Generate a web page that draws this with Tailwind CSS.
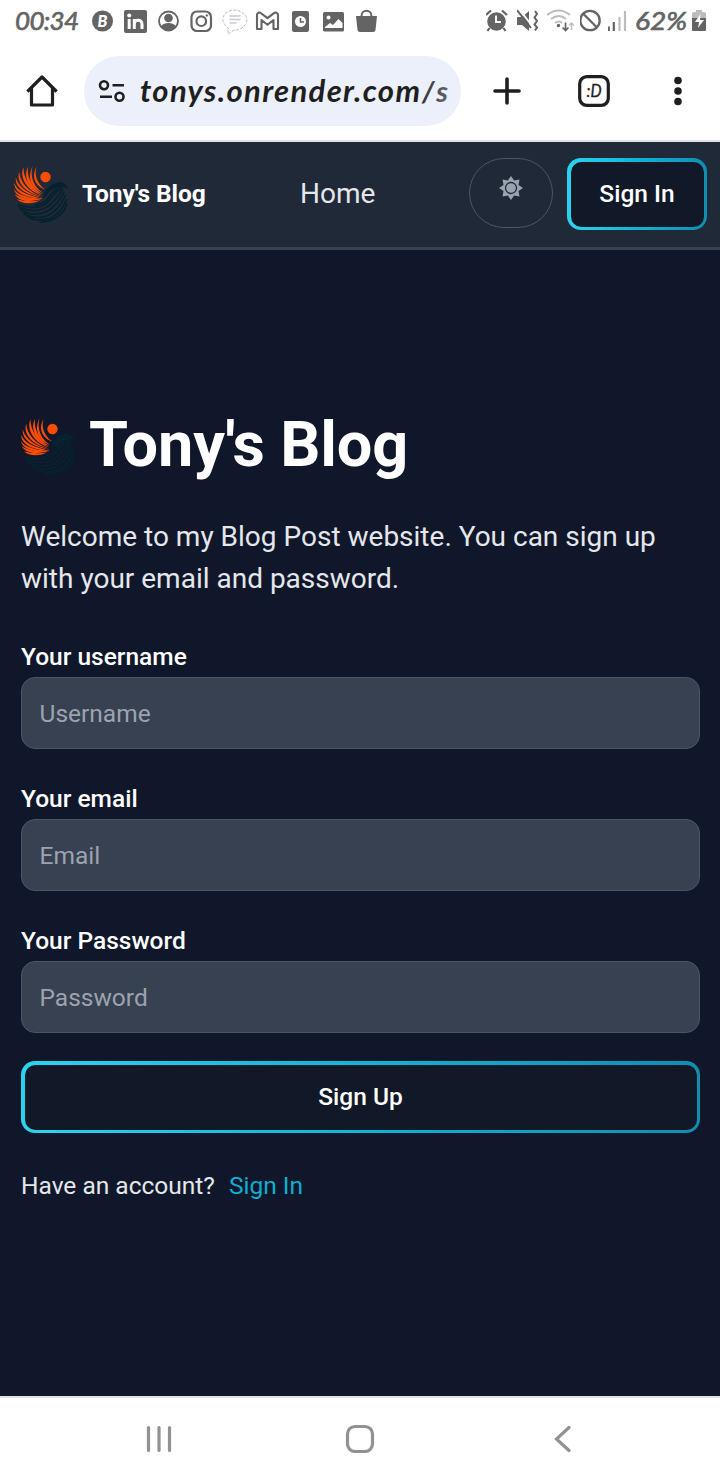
<!DOCTYPE html>
<html lang="en">
<head>
<meta charset="utf-8">
<title>Tony's Blog</title>
<script src="https://cdn.jsdelivr.net/npm/@tailwindcss/browser@4"></script>
</head>
<body class="w-[720px] h-[1480px] overflow-hidden bg-white flex flex-col font-['Roboto',sans-serif]">

<svg width="0" height="0" class="hidden">
  <symbol id="phoenix" viewBox="40 30 170 180">
    <g fill="#ff4d05">
      <circle cx="137" cy="66" r="15.500"/>
      <path d="M110 36C103 58 111 87 136 103C108 95 93 66 110 36Z"/>
      <path d="M98 34C90 63 101 97 129 113C97 104 80 70 98 34Z"/>
      <path d="M84 35C81 65 97 99 127 117C91 107 68 70 84 35Z"/>
      <path d="M71 37C70 69 92 104 126 121C84 109 57 69 71 37Z"/>
      <path d="M58 50C61 84 88 111 127 125C80 114 48 84 58 50Z"/>
      <path d="M48 67C54 95 84 117 128 128C78 121 44 98 48 67Z"/>
      <path d="M43 84C53 108 84 122 129 131C78 130 43 112 43 84Z"/>
      <path d="M42 102C55 121 88 130 130 132C86 137 48 129 42 102Z"/>
      <path d="M45 118C63 131 94 134 128 130C98 143 58 142 45 118Z"/>
      <path d="M51 133C75 140 101 140 121 136C101 148 66 149 51 133Z"/>
    </g>
    <path d="M132 131C129 107 148 90 170 83C181 77 201 83 204 103C196 95 190 96 181 100C170 98 148 105 132 131Z" fill="#06222e"/>
    <g fill="none" stroke="#06222e" stroke-width="5.500" stroke-linecap="round">
      <path d="M184 101C156 111 153 157 103 157C87 157 72 155 58 148"/>
      <path d="M172 104C149 111 148 148 107 150"/>
      <path d="M189 105C171 121 157 164 107 166C87 167 67 162 55 153"/>
      <path d="M192 114C179 131 161 174 112 177C90 178 73 173 62 163"/>
      <path d="M196 122C185 144 166 184 119 187C100 188 84 184 73 176"/>
      <path d="M200 134C191 156 169 193 125 195C110 196 98 193 88 188"/>
      <path d="M201 148C195 170 169 200 121 202"/>
    </g>
    <path d="M145 119Q155 100 172 98" fill="none" stroke="#1c2a36" stroke-width="2"/>
  </symbol>
</svg>

<!-- Phone status bar -->
<div class="h-[42px] shrink-0 flex items-center justify-between pr-[13px] text-[#646464]">
  <div class="flex items-center">
    <svg class="w-[86px] h-[42px]" viewBox="0 0 86 42"><text x="15" y="30" textLength="64" lengthAdjust="spacing" font-family="Lato" font-style="italic" font-weight="400" font-size="26" fill="currentColor" stroke="currentColor" stroke-width=".7">00:34</text></svg>
    <svg class="w-[33px] h-[42px]" viewBox="0 0 33 42"><circle cx="16.500" cy="21" r="10.500" fill="currentColor"/><text x="16.500" y="26.500" text-anchor="middle" font-family="Lato" font-weight="900" font-style="italic" font-size="16" fill="white">B</text></svg>
    <svg class="w-[33px] h-[42px]" viewBox="0 0 33 42"><rect x="5" y="10" width="23" height="23" rx="2" fill="currentColor"/><circle cx="10.200" cy="15.400" r="2" fill="white"/><path d="M10.200 19v10M15.300 29v-10M15.300 24c0-5 7.700-5 7.700 0v5" fill="none" stroke="white" stroke-width="3"/></svg>
    <svg class="w-[33px] h-[42px]" viewBox="0 0 33 42"><circle cx="16.500" cy="21" r="9.500" fill="none" stroke="currentColor" stroke-width="1.800"/><circle cx="16.500" cy="18" r="4.300" fill="currentColor"/><path d="M9 27c1-3 4-4 7.500-4s6.500 1 7.500 4c-4 5-11 5-15 0Z" fill="currentColor"/></svg>
    <svg class="w-[33px] h-[42px]" viewBox="0 0 33 42" fill="none" stroke="currentColor" stroke-width="2.200"><rect x="6.500" y="11.500" width="19.500" height="19.500" rx="5.500"/><circle cx="16.300" cy="21.200" r="4.800"/><circle cx="21.900" cy="15.500" r=".8" fill="currentColor" stroke-width="1"/></svg>
    <svg class="w-[33px] h-[42px]" viewBox="0 0 33 42" fill="none"><path d="M11 29C-1 20 7 10 16 10s19 9 8 18c-3 2-6 2-8 2l-6 4v-5" stroke="#bcbcc2" stroke-width="1" stroke-dasharray="3 1.500"/><path d="M11.500 16h11M11.500 19.500h11M11.500 23h7" stroke="#c9c9da" stroke-width="1.400"/></svg>
    <svg class="w-[33px] h-[42px]" viewBox="0 0 33 42" fill="none" stroke="currentColor" stroke-width="2.100" stroke-linejoin="round"><path d="M6 29V15c0-2.500 2.500-3 4-1.800l6.500 5 6.500-5c1.500-1.200 4-.7 4 1.800v14h-4.500v-9l-6 4.800-6-4.800v9Z"/></svg>
    <svg class="w-[33px] h-[42px]" viewBox="0 0 33 42"><rect x="8" y="11" width="17" height="21" rx="2" fill="currentColor"/><circle cx="16.500" cy="21.500" r="5.500" fill="white"/><path d="M16.500 18v4h3.500" fill="none" stroke="currentColor" stroke-width="1.600"/></svg>
    <svg class="w-[33px] h-[42px]" viewBox="0 0 33 42"><rect x="6" y="12" width="21" height="19.500" rx="1.500" fill="currentColor"/><circle cx="11.500" cy="17.500" r="2" fill="white"/><path d="M8 27l5-4 3 2 5.500-6 4 4v5H8Z" fill="white"/></svg>
    <svg class="w-[33px] h-[42px]" viewBox="0 0 33 42"><path d="M6 16h21l-1.500 14q-.4 2-2.500 2H10q-2.100 0-2.500-2Z" fill="currentColor"/><path d="M11.500 19v-3c0-7 10-7 10 0v3" fill="none" stroke="currentColor" stroke-width="2"/></svg>
  </div>
  <div class="flex items-center">
    <svg class="w-[31px] h-[42px]" viewBox="0 0 31 42"><circle cx="10.500" cy="21.500" r="9.300" fill="currentColor"/><path d="M0 15l5-4.500M21 15l-5-4.500M3.500 28l-2 3M17.500 28l2 3" stroke="currentColor" stroke-width="2.200"/><path d="M10 15.500v6.500h5" fill="none" stroke="white" stroke-width="1.900"/></svg>
    <svg class="w-[30px] h-[42px]" viewBox="0 0 30 42"><path d="M0 17h5l7-6v20l-7-6H0Z" fill="currentColor"/><path d="M2 9l14 18" stroke="white" stroke-width="2"/><path d="M0 10l14 18" stroke="currentColor" stroke-width="2"/><path d="M18 11l2 3-2.500 3.500 2.500 3.500-2.500 3.500 2.500 3-2 3" fill="none" stroke="currentColor" stroke-width="2"/></svg>
    <svg class="w-[33px] h-[42px]" viewBox="1 0 33 42" fill="none"><path d="M1 15Q13 6 24 15M5 19Q13 13 20 19M9 23q4-3 7 0" stroke="#bdbdbd" stroke-width="2"/><circle cx="12.500" cy="25.500" r="1.700" fill="currentColor"/><path d="M19.500 22.500v8m-3-3l3 3 3-3" stroke="currentColor" stroke-width="1.700"/><path d="M25.500 30v-7m-2.500 2.500l2.500-2.500 2.500 2.500" stroke="#bdbdbd" stroke-width="1.500"/></svg>
    <svg class="w-[28px] h-[42px]" viewBox="1 0 28 42" fill="none" stroke="currentColor" stroke-width="2.300"><circle cx="11" cy="20.500" r="9.700"/><path d="M4.500 14l13 13"/></svg>
    <svg class="w-[27px] h-[42px]" viewBox="1 0 27 42" stroke-width="2.200"><path d="M1.800 31v-4.500M6.800 31v-9" stroke="currentColor"/><path d="M12.500 31V17M18 31V11" stroke="#bdbdbd"/></svg>
    <svg class="w-[57px] h-[42px]" viewBox="0 0 57 42"><text x="0" y="30" textLength="52" lengthAdjust="spacingAndGlyphs" font-family="Lato" font-style="italic" font-weight="400" font-size="26" fill="currentColor" stroke="currentColor" stroke-width=".7">62%</text></svg>
    <svg class="w-[15px] h-[42px]" viewBox="0 0 15 42"><path d="M0 14q0-2 2-2h2v-2h6v2h2q2 0 2 2v7H0Z" fill="#bdbdbd"/><path d="M0 18h14v12q0 1-1 1H1q-1 0-1-1Z" fill="currentColor"/><path d="M8.500 14L3 22h4l-1 6 6-8H8Z" fill="white"/></svg>
  </div>
</div>

<!-- Browser toolbar -->
<div class="h-[100px] shrink-0 flex items-start border-b-2 border-[#dfe1e2] pt-[14px] text-[#1f1f1f]">
  <div class="w-[84px] h-[70px] flex items-center justify-center">
    <svg class="w-[34px] h-[36px]" viewBox="0 0 34 36" fill="none" stroke="currentColor" stroke-width="3.200" stroke-linejoin="round" stroke-linecap="square"><path d="M3.500 17.500L17 4l13.500 13.500M6.500 16v16h21V16"/></svg>
  </div>
  <div class="w-[377px] h-[70px] rounded-full bg-[#ecf0fa] flex items-center pl-[14px]">
    <svg class="w-[29px] h-[30px] shrink-0" viewBox="0 0 29 30" fill="none" stroke="currentColor" stroke-width="2.600"><circle cx="6" cy="9.200" r="4"/><path d="M14.500 9.200H26M2 20.700h12"/><circle cx="21.500" cy="20.700" r="4"/></svg>
    <svg class="w-[324px] h-[70px]" viewBox="0 0 324 70">
      <defs><linearGradient id="fade" gradientUnits="userSpaceOnUse" x1="285" x2="330" y1="0" y2="0"><stop offset="0" stop-color="#1f1f1f"/><stop offset="1" stop-color="#74777e"/></linearGradient></defs>
      <text x="13" y="45.500" textLength="280" lengthAdjust="spacing" font-family="Lato" font-style="italic" font-weight="700" font-size="31" fill="currentColor">tonys.onrender.com</text>
      <text x="295" y="45.500" font-family="Lato" font-style="italic" font-weight="700" font-size="29" textLength="26" fill="url(#fade)">/s</text>
    </svg>
  </div>
  <div class="w-[92px] h-[70px] flex items-center justify-center">
    <svg class="w-[28px] h-[28px]" viewBox="0 0 28 28" stroke="currentColor" stroke-width="3.600" stroke-linecap="round"><path d="M14 2v24M2 14h24"/></svg>
  </div>
  <div class="w-[82px] h-[70px] flex items-center justify-center">
    <svg class="w-[32px] h-[32px]" viewBox="0 0 32 32"><rect x="1.700" y="1.700" width="28.600" height="28.600" rx="7" fill="none" stroke="currentColor" stroke-width="3.200"/><text x="8.500" y="21.500" textLength="15" lengthAdjust="spacingAndGlyphs" font-family="Lato" font-style="italic" font-weight="400" font-size="17" fill="currentColor" stroke="currentColor" stroke-width=".4">:D</text></svg>
  </div>
  <div class="w-[85px] h-[70px] flex items-center justify-center">
    <svg class="w-[8px] h-[30px]" viewBox="0 0 8 30" fill="currentColor"><circle cx="4" cy="4.500" r="3.800"/><circle cx="4" cy="15" r="3.800"/><circle cx="4" cy="25.500" r="3.800"/></svg>
  </div>
</div>

<!-- Site header -->
<header class="h-[108px] shrink-0 bg-[#1f2937] border-b-3 border-[#374151] flex items-start pt-4 pl-[13px] pr-[13px]">
  <div class="h-[72px] flex items-center">
    <svg class="w-[57px] h-[60px] mt-[1px]"><use href="#phoenix"/></svg>
    <span class="ml-3 w-[218px] text-[24.500px] font-bold text-white tracking-[-0.1px] whitespace-nowrap">Tony's Blog</span>
    <a class="text-[28px] text-gray-200">Home</a>
  </div>
  <button class="ml-auto w-[84px] h-[70px] rounded-full border border-[#4b5563] flex justify-center pt-[17px]">
    <svg class="w-[24px] h-[24px]" viewBox="0 0 24 24"><path d="M12 0l3.100 4.500 5.400-1-1 5.400L24 12l-4.500 3.100 1 5.400-5.400-1L12 24l-3.100-4.500-5.400 1 1-5.400L0 12l4.500-3.100-1-5.400 5.400 1Z" fill="#9ca3af"/><circle cx="12" cy="12" r="5.500" fill="#9ca3af" stroke="#1f2937" stroke-width="1.300"/></svg>
  </button>
  <button class="ml-[14px] w-[140px] h-[72px] p-[3.500px] rounded-[14px] bg-linear-to-r from-[#2bd4ee] via-[#10b5d3] to-[#108eb0]">
    <span class="h-full w-full rounded-[10.500px] bg-[#111827] flex items-center justify-center text-[24.500px] font-medium text-white">Sign In</span>
  </button>
</header>

<!-- Sign-up form -->
<main class="h-[1146px] shrink-0 bg-[#10172a] px-5 pt-[150px] text-white">
  <div class="flex h-[88px] items-center">
    <svg class="w-[57px] h-[60px] mt-[6px]"><use href="#phoenix"/></svg>
    <h1 class="ml-[12px] mt-[2px] text-[63px] leading-[70px] font-bold whitespace-nowrap tracking-[-0.15px]">Tony's Blog</h1>
  </div>
  <p class="mt-[28px] ml-px text-[28px] leading-[42px] text-gray-200 whitespace-nowrap">Welcome to my Blog Post website. You can sign up<br>with your email and password.</p>
  <form class="mt-[35px] ml-px w-[679px] flex flex-col gap-7">
    <div>
      <label class="block h-[42px] leading-[44px] text-[24.500px] font-medium">Your username</label>
      <input type="text" placeholder="Username" class="block w-full h-[72px] rounded-[14px] border border-[#4b5563] bg-[#374151] px-[17.500px] text-[24.500px] placeholder:text-[#9ca3af]">
    </div>
    <div>
      <label class="block h-[42px] leading-[44px] text-[24.500px] font-medium">Your email</label>
      <input type="text" placeholder="Email" class="block w-full h-[72px] rounded-[14px] border border-[#4b5563] bg-[#374151] px-[17.500px] text-[24.500px] placeholder:text-[#9ca3af]">
    </div>
    <div>
      <label class="block h-[42px] leading-[44px] text-[24.500px] font-medium">Your Password</label>
      <input type="text" placeholder="Password" class="block w-full h-[72px] rounded-[14px] border border-[#4b5563] bg-[#374151] px-[17.500px] text-[24.500px] placeholder:text-[#9ca3af]">
    </div>
    <button type="button" class="w-full h-[72px] p-[3.500px] rounded-[14px] bg-linear-to-r from-[#2bd4ee] via-[#10b5d3] to-[#108eb0]">
      <span class="h-full w-full rounded-[10.500px] bg-[#111827] flex items-center justify-center pt-px text-[24.500px] font-medium">Sign Up</span>
    </button>
  </form>
  <div class="mt-[35px] ml-px flex gap-[14px] text-[24.500px] leading-[35px] text-gray-200">
    <span>Have an account?</span><a class="text-[#0eaed0]">Sign In</a>
  </div>
</main>

<!-- System navigation -->
<nav class="h-[84px] shrink-0 border-t-2 border-[#e2e4e4] grid grid-cols-[318px_84px_320px] items-center text-[#929292]">
  <svg class="w-[28px] h-[28px] justify-self-center" viewBox="0 0 28 28" stroke="currentColor" stroke-width="3.200" stroke-linecap="round"><path d="M3.500 2.500v23M14 2.500v23M24.500 2.500v23"/></svg>
  <svg class="w-[30px] h-[30px] justify-self-center" viewBox="0 0 30 30" fill="none" stroke="currentColor" stroke-width="3.200"><rect x="2.500" y="2.500" width="25" height="25" rx="7.500"/></svg>
  <svg class="w-[18px] h-[28px] justify-self-center" viewBox="0 0 18 28" fill="none" stroke="currentColor" stroke-width="3.200" stroke-linecap="round"><path d="M16 2.500L3.500 14 16 25.500"/></svg>
</nav>
</body>
</html>
